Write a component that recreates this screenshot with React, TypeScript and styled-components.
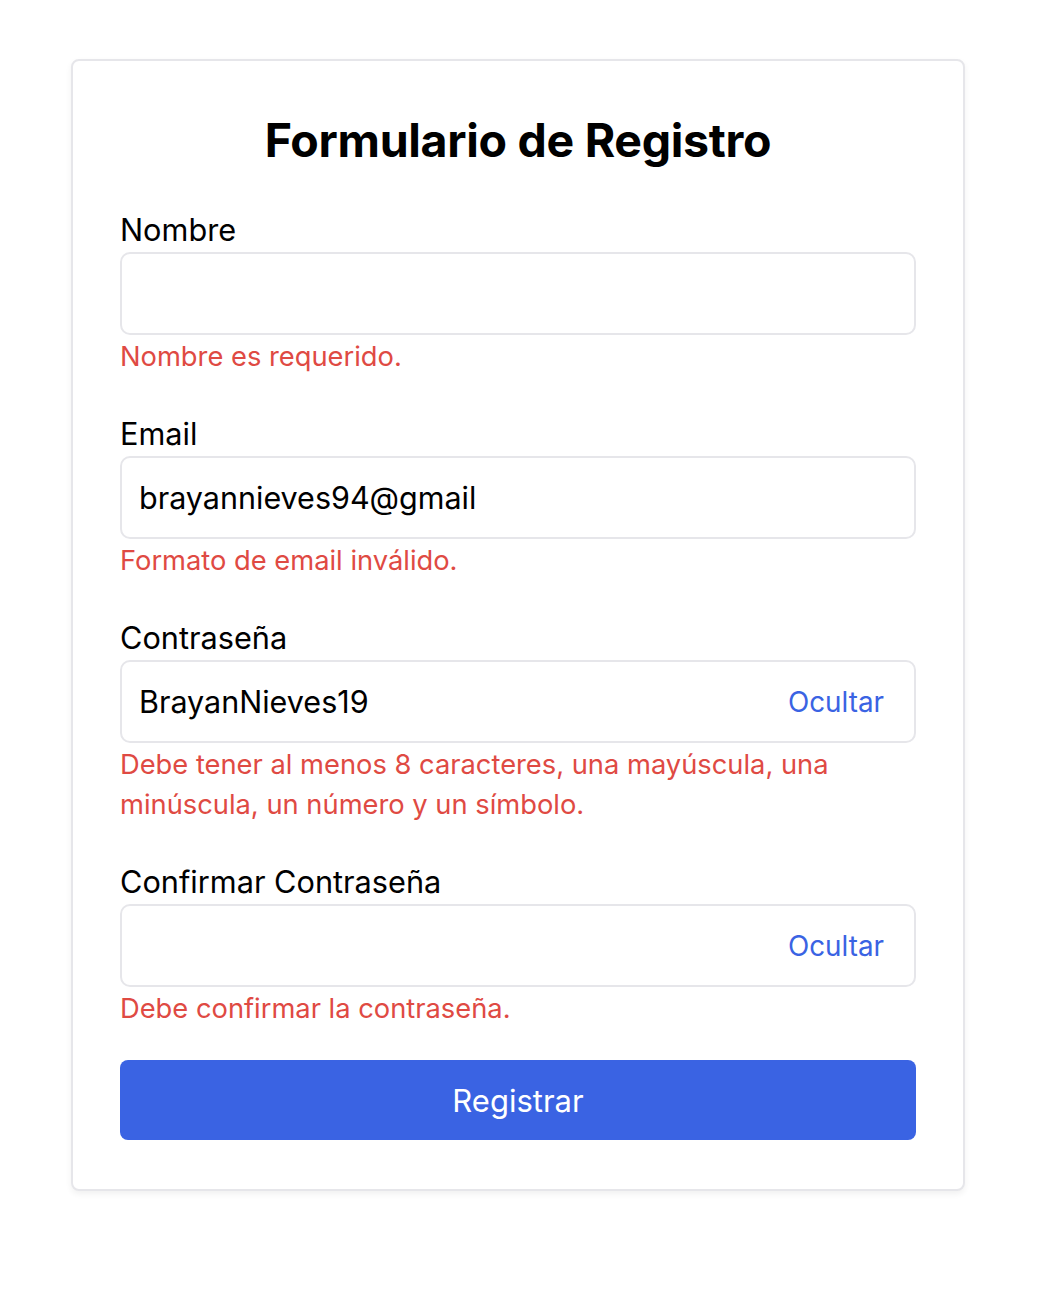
import { useState } from 'react';
import styled, { createGlobalStyle } from 'styled-components';

const GlobalStyle = createGlobalStyle`
  * { box-sizing: border-box; }
  body {
    margin: 0;
    background: #ffffff;
    font-family: Inter, "Noto Sans", sans-serif;
    color: #000;
  }
`;

const Page = styled.div`
  display: flex;
  justify-content: center;
  padding: 59px 6px 60px 0;
`;

const Card = styled.form`
  width: 894px;
  padding: 49px 47px 49px;
  border: 2px solid #e6e6ea;
  border-radius: 8px;
  background: #fff;
  box-shadow: 0 3px 6px rgba(0, 0, 0, 0.06);
  display: flex;
  flex-direction: column;
`;

const Title = styled.h1`
  margin: 0 0 42px;
  font-size: 46.5px;
  line-height: 60px;
  font-weight: 700;
  text-align: center;
  letter-spacing: -0.3px;
`;

const Fields = styled.div`
  display: flex;
  flex-direction: column;
  gap: 39px;
  margin-bottom: 31px;
`;

const Field = styled.div`
  display: flex;
  flex-direction: column;
`;

const Label = styled.label`
  font-size: 30.7px;
  line-height: 36px;
  margin-bottom: 4px;
`;

const InputBox = styled.div`
  display: flex;
  align-items: center;
  height: 83px;
  border: 2px solid #e6e6ea;
  border-radius: 10px;
  padding: 0 30px 0 17px;
`;

const Input = styled.input`
  flex: 1;
  min-width: 0;
  border: none;
  outline: none;
  background: transparent;
  font-family: inherit;
  font-size: 30.5px;
  color: #000;
  padding: 0;
`;

const Toggle = styled.button`
  border: none;
  background: none;
  padding: 0;
  font-family: inherit;
  font-size: 27.8px;
  color: #3a63e3;
  cursor: pointer;
`;

const Error = styled.p`
  margin: 2px 0 0;
  font-size: 27.3px;
  line-height: 40px;
  color: #df4a43;
`;

const Submit = styled.button`
  height: 80px;
  border: none;
  border-radius: 8px;
  background: #3a63e3;
  color: #fff;
  font-family: inherit;
  font-size: 31px;
  cursor: pointer;
`;

const PasswordField = ({ value }: { value: string }) => {
  const [shown, setShown] = useState(true);
  return (
    <InputBox>
      <Input type={shown ? 'text' : 'password'} defaultValue={value} />
      <Toggle type="button" onClick={() => setShown(!shown)}>
        {shown ? 'Ocultar' : 'Mostrar'}
      </Toggle>
    </InputBox>
  );
};

export default function App() {
  return (
    <>
      <GlobalStyle />
      <Page>
        <Card onSubmit={(e) => e.preventDefault()}>
          <Title>Formulario de Registro</Title>
          <Fields>
            <Field>
              <Label>Nombre</Label>
              <InputBox>
                <Input type="text" />
              </InputBox>
              <Error>Nombre es requerido.</Error>
            </Field>
            <Field>
              <Label>Email</Label>
              <InputBox>
                <Input type="text" defaultValue="brayannieves94@gmail" />
              </InputBox>
              <Error>Formato de email inválido.</Error>
            </Field>
            <Field>
              <Label>Contraseña</Label>
              <PasswordField value="BrayanNieves19" />
              <Error>
                Debe tener al menos 8 caracteres, una mayúscula, una minúscula, un número y un
                símbolo.
              </Error>
            </Field>
            <Field>
              <Label>Confirmar Contraseña</Label>
              <PasswordField value="" />
              <Error>Debe confirmar la contraseña.</Error>
            </Field>
          </Fields>
          <Submit type="submit">Registrar</Submit>
        </Card>
      </Page>
    </>
  );
}
